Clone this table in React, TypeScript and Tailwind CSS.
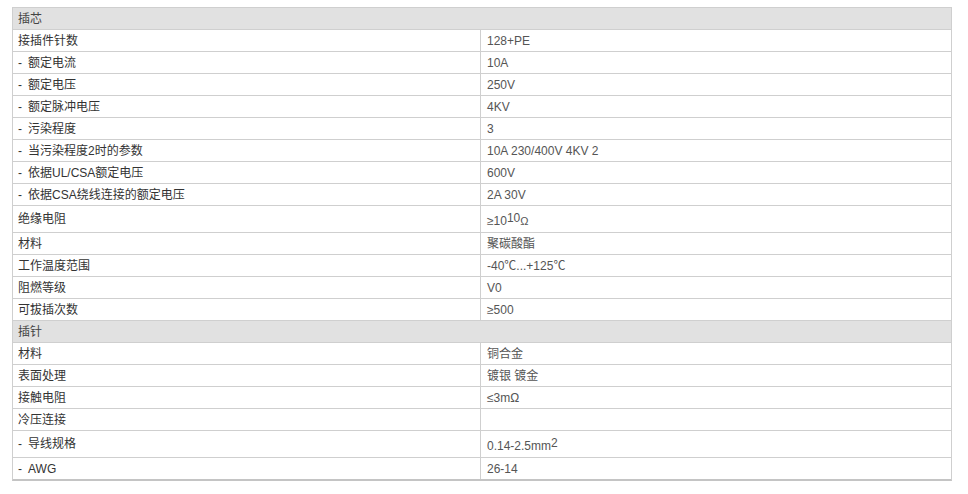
import React from 'react';

type Row =
  | { kind: 'head'; label: string }
  | { kind: 'row'; label: string; value: React.ReactNode; tall?: boolean };

const rows: Row[] = [
  { kind: 'head', label: '插芯' },
  { kind: 'row', label: '接插件针数', value: '128+PE' },
  { kind: 'row', label: '－额定电流', value: '10A' },
  { kind: 'row', label: '－额定电压', value: '250V' },
  { kind: 'row', label: '－额定脉冲电压', value: '4KV' },
  { kind: 'row', label: '－污染程度', value: '3' },
  { kind: 'row', label: '－当污染程度2时的参数', value: '10A 230/400V 4KV 2' },
  { kind: 'row', label: '－依据UL/CSA额定电压', value: '600V' },
  { kind: 'row', label: '－依据CSA绕线连接的额定电压', value: '2A 30V' },
  {
    kind: 'row',
    label: '绝缘电阻',
    tall: true,
    value: (
      <span className="pt-[4px]">
        ≥10<sup className="relative -top-[3px] text-[12px]">10</sup>
        <span className="text-[11px]">Ω</span>
      </span>
    ),
  },
  { kind: 'row', label: '材料', value: '聚碳酸酯' },
  { kind: 'row', label: '工作温度范围', value: '-40℃...+125℃' },
  { kind: 'row', label: '阻燃等级', value: 'V0' },
  { kind: 'row', label: '可拔插次数', value: '≥500' },
  { kind: 'head', label: '插针' },
  { kind: 'row', label: '材料', value: '铜合金' },
  { kind: 'row', label: '表面处理', value: '镀银 镀金' },
  { kind: 'row', label: '接触电阻', value: '≤3mΩ' },
  { kind: 'row', label: '冷压连接', value: '' },
  {
    kind: 'row',
    label: '－导线规格',
    tall: true,
    value: (
      <span className="pt-[4px]">
        0.14-2.5mm<sup className="relative -top-[3px] text-[12px]">2</sup>
      </span>
    ),
  },
  { kind: 'row', label: '－AWG', value: '26-14' },
];

const Dash = ({ label }: { label: string }) =>
  label.startsWith('－') ? (
    <>
      <span className="mr-[6px]">-</span>
      {label.slice(1)}
    </>
  ) : (
    <>{label}</>
  );

export default function App() {
  return (
    <div
      className="min-h-[494px] w-[968px] bg-white pt-[7px] pl-[12px] text-[12px]"
      style={{ fontFamily: '"Liberation Sans", "Noto Sans CJK SC", sans-serif' }}
    >
      <div className="w-[940px] border border-b-2 border-[#cfcfcf] border-b-[#c4c4c4]">
        {rows.map((r, i) => {
          const last = i === rows.length - 1;
          if (r.kind === 'head') {
            return (
              <div
                key={i}
                className="flex h-[22px] items-center border-b border-[#cfcfcf] bg-[#e1e1e1] pl-[5px] text-[#444]"
              >
                {r.label}
              </div>
            );
          }
          return (
            <div
              key={i}
              className={`flex ${
                last ? 'h-[21px]' : r.tall ? 'h-[27px] border-b border-[#cfcfcf]' : 'h-[22px] border-b border-[#cfcfcf]'
              }`}
            >
              <div className="flex w-[468px] items-center border-r border-[#cfcfcf] pl-[5px] text-[#333]">
                <Dash label={r.label} />
              </div>
              <div className="flex flex-1 items-center pl-[6px] text-[#555]">
                {r.value}
              </div>
            </div>
          );
        })}
      </div>
    </div>
  );
}
